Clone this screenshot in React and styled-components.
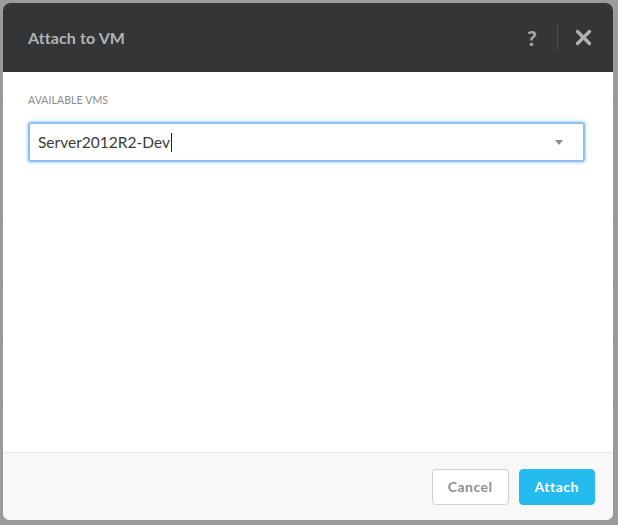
import React from "react";
import styled, { createGlobalStyle } from "styled-components";

const Global = createGlobalStyle`
  html, body { margin: 0; padding: 0; }
  body {
    background: #9b9b9b;
    font-family: Lato, "Open Sans", "Liberation Sans", sans-serif;
    width: 618px;
    height: 525px;
    overflow: hidden;
  }
`;

const Stage = styled.div`
  position: relative;
  width: 618px;
  height: 525px;
  background: #9b9b9b;
`;

const BackLine = styled.div`
  position: absolute;
  left: 0;
  right: 0;
  top: ${(p) => p.$y}px;
  height: 1px;
  background: #8f8f8f;
`;

const Dialog = styled.div`
  position: absolute;
  left: 3px;
  top: 3px;
  width: 610px;
  height: 517px;
  background: #fff;
  border-radius: 7px;
  overflow: hidden;
  display: flex;
  flex-direction: column;
`;

const Header = styled.div`
  height: 69px;
  flex: none;
  background: #343537;
  display: flex;
  align-items: center;
  padding: 0 20px 0 25px;
`;

const Title = styled.h1`
  margin: 0;
  flex: 1;
  font-size: 16px;
  font-weight: 700;
  color: #b3b3b3;
  letter-spacing: 0.1px;
`;

const HelpIcon = styled.span`
  font-size: 21px;
  font-weight: 900;
  color: #a8a8a8;
  width: 24px;
  text-align: center;
`;

const Divider = styled.span`
  width: 1px;
  height: 27px;
  background: #4a4b4d;
  margin: 0 15px 0 13px;
`;

const CloseButton = styled.span`
  display: flex;
  align-items: center;
  justify-content: center;
  width: 20px;
  height: 20px;
`;

const Body = styled.div`
  flex: 1;
  padding: 22px 28px 0 25px;
`;

const Label = styled.div`
  font-size: 10.5px;
  color: #8a8a8a;
  letter-spacing: 0.1px;
  margin-bottom: 16px;
`;

const Select = styled.div`
  height: 36px;
  border: 2px solid #8ec0f7;
  box-shadow: 0 0 3px 1px #b7d6fb;
  border-radius: 3px;
  display: flex;
  align-items: center;
  padding: 0 20px 0 8px;
`;

const Value = styled.span`
  flex: 1;
  font-size: 15.5px;
  color: #3a3a3a;
  display: flex;
  align-items: center;
`;

const Caret = styled.span`
  width: 1px;
  height: 19px;
  background: #222;
  margin-left: 1px;
`;

const Footer = styled.div`
  height: 67px;
  flex: none;
  background: #f8f8f8;
  border-top: 1px solid #e6e6e6;
  display: flex;
  align-items: center;
  justify-content: flex-end;
  gap: 10px;
  padding: 0 18px 0 0;
`;

const Button = styled.button`
  height: 36px;
  padding: 0 ${(p) => (p.$primary ? 15 : 15)}px;
  border-radius: 4px;
  font-family: inherit;
  font-size: 14px;
  font-weight: 700;
  letter-spacing: 0.5px;
  border: 1px solid ${(p) => (p.$primary ? "#25bbef" : "#cfcfcf")};
  background: ${(p) => (p.$primary ? "#25bbef" : "#fff")};
  color: ${(p) => (p.$primary ? "#fff" : "#8d8f91")};
`;

export default function App() {
  return (
    <Stage>
      <Global />
      {[33, 100, 220, 280, 343, 405].map((y) => (
        <BackLine key={y} $y={y} />
      ))}
      <Dialog>
        <Header>
          <Title>Attach to VM</Title>
          <HelpIcon>?</HelpIcon>
          <Divider />
          <CloseButton>
            <svg width="17" height="17" viewBox="0 0 17 17">
              <path d="M2.5 2.5 L14.5 14.5 M14.5 2.5 L2.5 14.5" stroke="#b0b0b0" strokeWidth="3.4" strokeLinecap="round" />
            </svg>
          </CloseButton>
        </Header>
        <Body>
          <Label>AVAILABLE VMS</Label>
          <Select>
            <Value>
              Server2012R2-Dev
              <Caret />
            </Value>
            <svg width="8" height="5" viewBox="0 0 8 5">
              <path d="M0 0 L8 0 L4 5 Z" fill="#8a8a8a" />
            </svg>
          </Select>
        </Body>
        <Footer>
          <Button>Cancel</Button>
          <Button $primary>Attach</Button>
        </Footer>
      </Dialog>
    </Stage>
  );
}
